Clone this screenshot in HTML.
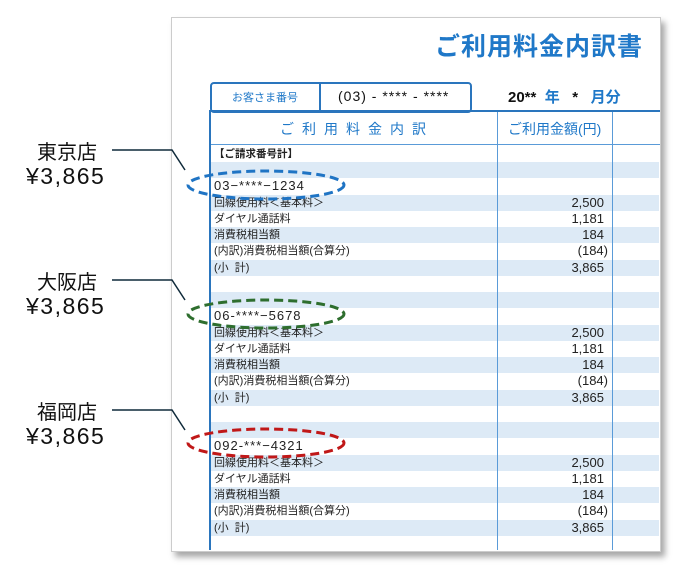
<!DOCTYPE html><html><head><meta charset="utf-8"><style>
body{margin:0;width:686px;height:570px;background:#fff;position:relative;overflow:hidden;font-family:"Liberation Sans","Noto Sans CJK JP",sans-serif}
.a{position:absolute;white-space:nowrap}
#paper{position:absolute;left:171px;top:17px;width:488px;height:533px;background:#fff;border:1px solid #ccc;box-shadow:4px 5px 6px rgba(0,0,0,.35)}
.row{position:absolute;left:211px;width:448px;height:16.25px}
.b{background:#ddeaf6}
.t{position:absolute;left:214px;font-size:11px;color:#222;line-height:16px}
.n{position:absolute;right:82px;font-size:13px;color:#222;line-height:16px;text-align:right}
.blue{color:#1f78c8}
.lab{font-size:20px;color:#111}
.yen{font-size:23px;color:#111;letter-spacing:1.5px}
</style></head><body>
<div id="paper"></div>
<div class="a blue" style="right:43px;top:27px;font-size:25px;font-weight:bold;letter-spacing:1px">ご利用料金内訳書</div>
<div class="a" style="left:210px;top:82px;width:258px;height:27px;border:2px solid #2a75bd;border-radius:4px"></div>
<div class="a" style="left:319px;top:82px;width:2px;height:29px;background:#2a75bd"></div>
<div class="a blue" style="left:232px;top:89px;font-size:11px">お客さま番号</div>
<div class="a" style="left:338px;top:88px;font-size:14px;color:#111;letter-spacing:1px">(03) - **** - ****</div>
<div class="a" style="left:508px;top:86px;font-size:15px;font-weight:bold;color:#111">20** <span class="blue">&nbsp;年&nbsp;&nbsp;</span> * <span class="blue">&nbsp;&nbsp;月分</span></div>
<div class="a" style="left:209px;top:110px;width:451px;height:2px;background:#2a75bd;border-radius:4px 0 0 0"></div>
<div class="a" style="left:209px;top:110px;width:2px;height:440px;background:#2a75bd"></div>
<div class="a" style="left:211px;top:144px;width:449px;height:1px;background:#5a9bd8"></div>
<div class="a blue" style="left:280px;top:119px;font-size:14px;letter-spacing:8px">ご利用料金内訳</div>
<div class="a blue" style="left:508px;top:119px;font-size:14px">ご利用金額(円)</div>
<div class="row b" style="top:162px"></div><div class="row b" style="top:194.5px"></div><div class="row b" style="top:227px"></div><div class="row b" style="top:259.5px"></div><div class="row b" style="top:292px"></div><div class="row b" style="top:324.5px"></div><div class="row b" style="top:357px"></div><div class="row b" style="top:389.5px"></div><div class="row b" style="top:422px"></div><div class="row b" style="top:454.5px"></div><div class="row b" style="top:487px"></div><div class="row b" style="top:519.5px"></div>
<div class="a" style="left:497px;top:112px;width:1px;height:438px;background:#5a9bd8"></div>
<div class="a" style="left:612px;top:112px;width:1px;height:438px;background:#5a9bd8"></div>
<div class="t" style="top:146px;font-weight:bold;font-size:10.5px">【ご請求番号計】</div>
<div class="t" style="top:178px;font-size:13px;letter-spacing:1px">03−****−1234</div>
<div class="t" style="top:194.5px">回線使用料＜基本料＞</div><div class="n" style="top:194.5px">2,500</div>
<div class="t" style="top:211px">ダイヤル通話料</div><div class="n" style="top:211px">1,181</div>
<div class="t" style="top:227px">消費税相当額</div><div class="n" style="top:227px">184</div>
<div class="t" style="top:243px">(内訳)消費税相当額(合算分)</div><div class="n" style="top:243px;right:78px">(184)</div>
<div class="t" style="top:259.5px">(小&nbsp;&nbsp;計)</div><div class="n" style="top:259.5px">3,865</div>
<div class="t" style="top:308px;font-size:13px;letter-spacing:1px">06-****−5678</div>
<div class="t" style="top:324.5px">回線使用料＜基本料＞</div><div class="n" style="top:324.5px">2,500</div>
<div class="t" style="top:341px">ダイヤル通話料</div><div class="n" style="top:341px">1,181</div>
<div class="t" style="top:357px">消費税相当額</div><div class="n" style="top:357px">184</div>
<div class="t" style="top:373px">(内訳)消費税相当額(合算分)</div><div class="n" style="top:373px;right:78px">(184)</div>
<div class="t" style="top:389.5px">(小&nbsp;&nbsp;計)</div><div class="n" style="top:389.5px">3,865</div>
<div class="t" style="top:438px;font-size:13px;letter-spacing:1px">092-***−4321</div>
<div class="t" style="top:454.5px">回線使用料＜基本料＞</div><div class="n" style="top:454.5px">2,500</div>
<div class="t" style="top:471px">ダイヤル通話料</div><div class="n" style="top:471px">1,181</div>
<div class="t" style="top:487px">消費税相当額</div><div class="n" style="top:487px">184</div>
<div class="t" style="top:503px">(内訳)消費税相当額(合算分)</div><div class="n" style="top:503px;right:78px">(184)</div>
<div class="t" style="top:519.5px">(小&nbsp;&nbsp;計)</div><div class="n" style="top:519.5px">3,865</div>
<svg class="a" style="left:0;top:0" width="686" height="570">
<g fill="none" stroke-width="3" stroke-dasharray="9,5">
<ellipse cx="266" cy="185" rx="78" ry="14" stroke="#1f74c4"/>
<ellipse cx="266" cy="314" rx="78" ry="14" stroke="#2e6e2e"/>
<ellipse cx="266" cy="443" rx="78" ry="14" stroke="#c01818"/>
</g>
<g fill="none" stroke="#0f2a3a" stroke-width="1.5">
<polyline points="112,150 172,150 185,170"/>
<polyline points="112,280 172,280 185,300"/>
<polyline points="112,410 172,410 185,430"/>
</g></svg>
<div class="a lab" style="left:37px;top:136px">東京店</div>
<div class="a yen" style="left:26px;top:163px">¥3,865</div>
<div class="a lab" style="left:37px;top:266px">大阪店</div>
<div class="a yen" style="left:26px;top:293px">¥3,865</div>
<div class="a lab" style="left:37px;top:396px">福岡店</div>
<div class="a yen" style="left:26px;top:423px">¥3,865</div>
</body></html>
